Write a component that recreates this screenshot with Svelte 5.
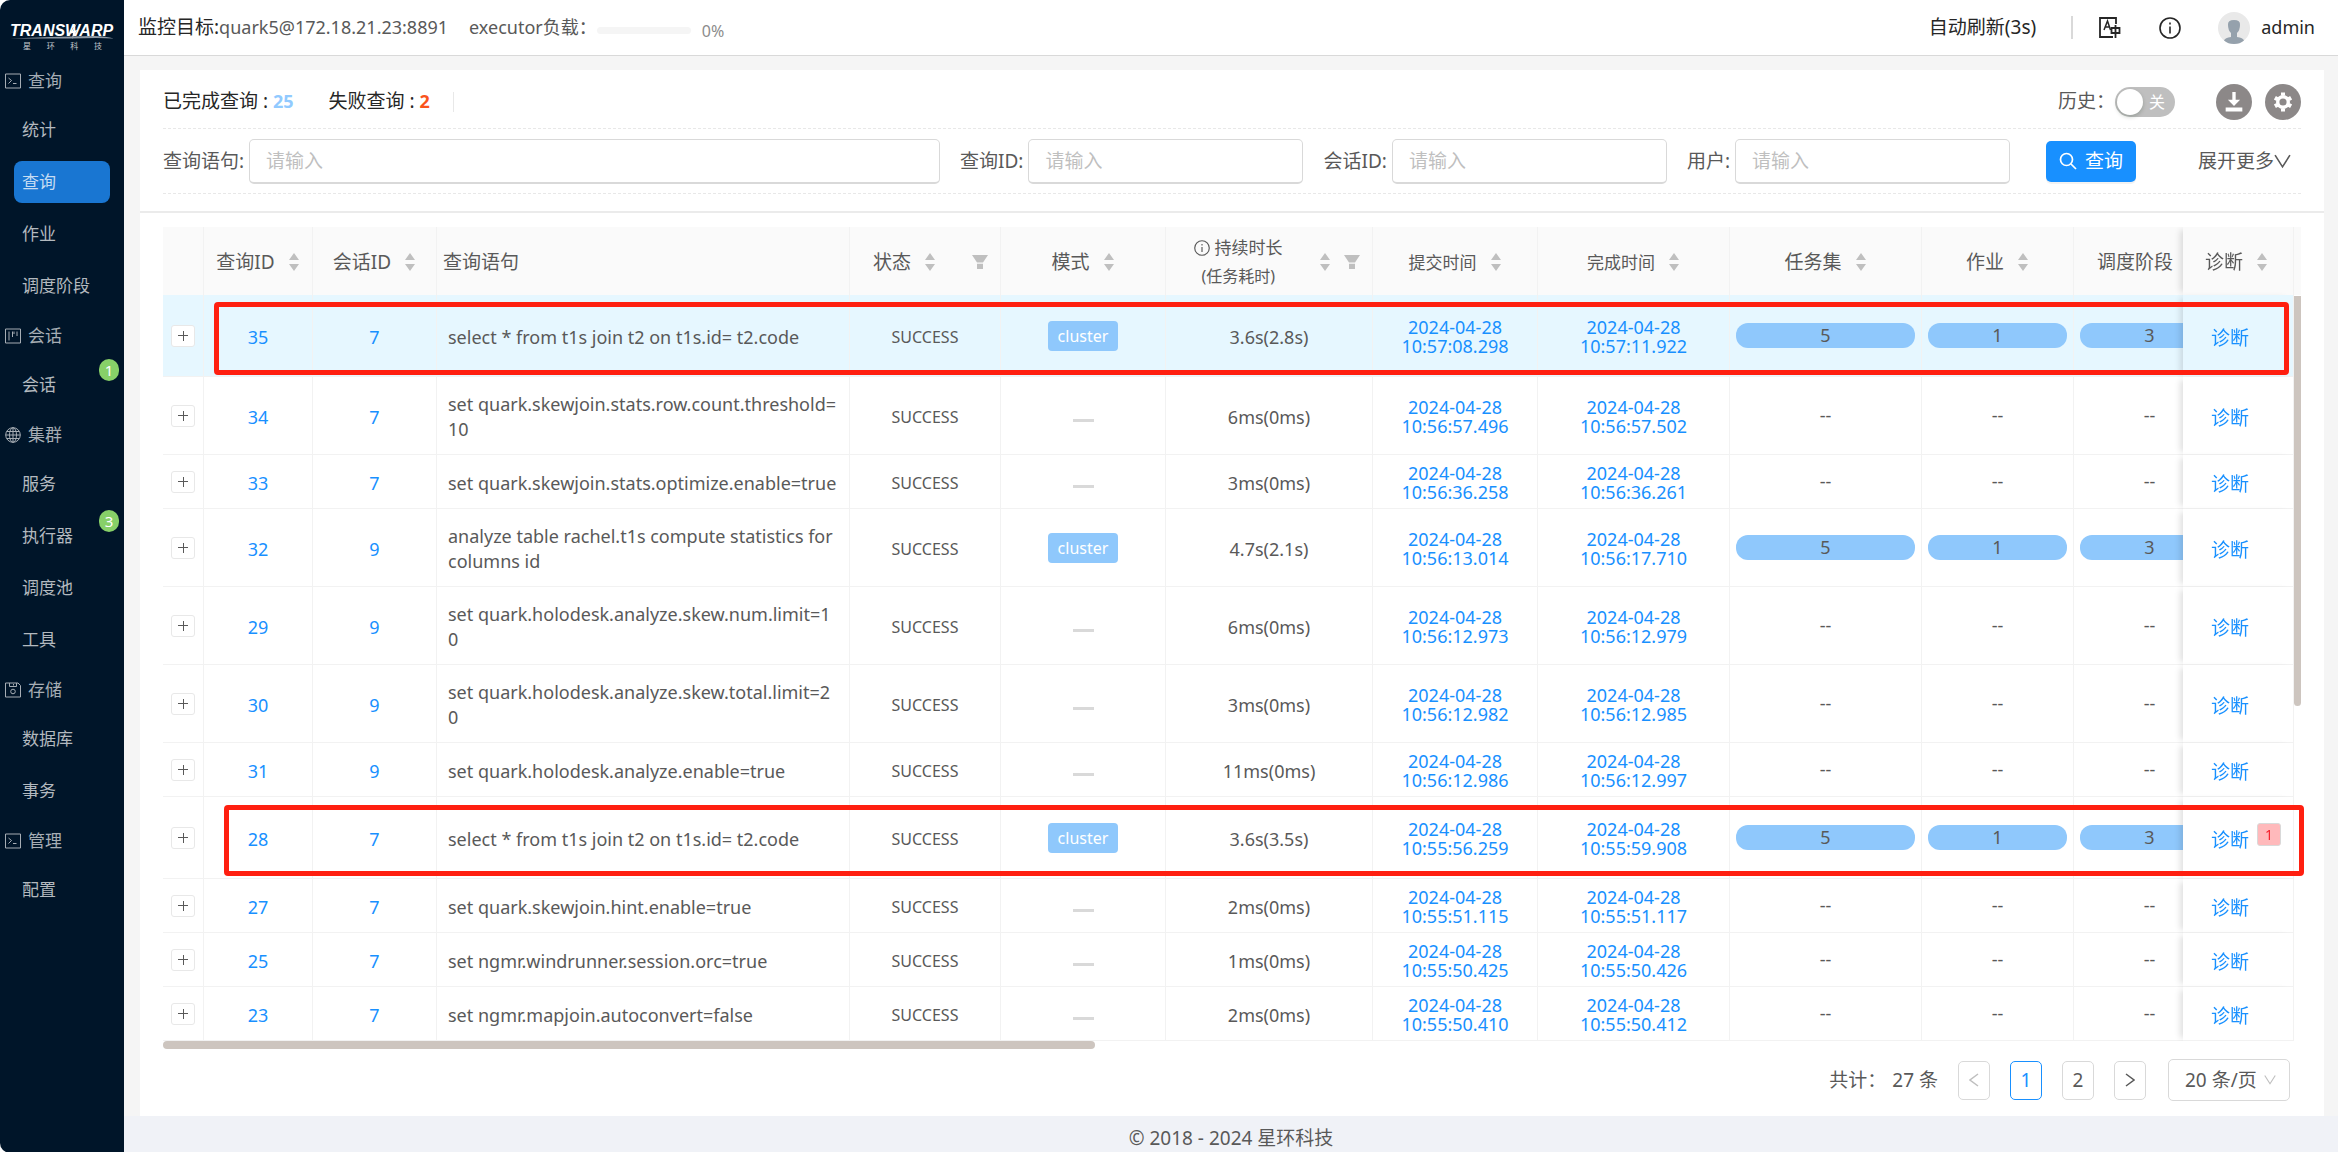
<script>

let active = '查询'
let history = false
let page = 1
let pageSize = '20'
let sql = ''
let queryId = ''
let sessionId = ''
let user = ''

const menu = [
	{ icon: 'terminal', name: '查询', items: [['统计'], ['查询'], ['作业'], ['调度阶段']] },
	{ icon: 'board', name: '会话', items: [['会话', 1]] },
	{ icon: 'globe', name: '集群', items: [['服务'], ['执行器', 3], ['调度池'], ['工具']] },
	{ icon: 'disk', name: '存储', items: [['数据库'], ['事务']] },
	{ icon: 'terminal', name: '管理', items: [['配置']] },
]

// id, session, sql, duration, submitted, finished, [stage sets, jobs, stages], warnings
const rows = [
	[35, 7, 'select * from t1s join t2 on t1s.id= t2.code', '3.6s(2.8s)', '10:57:08.298', '10:57:11.922', [5, 1, 3]],
	[34, 7, 'set quark.skewjoin.stats.row.count.threshold=\n10', '6ms(0ms)', '10:56:57.496', '10:56:57.502'],
	[33, 7, 'set quark.skewjoin.stats.optimize.enable=true', '3ms(0ms)', '10:56:36.258', '10:56:36.261'],
	[32, 9, 'analyze table rachel.t1s compute statistics for\ncolumns id', '4.7s(2.1s)', '10:56:13.014', '10:56:17.710', [5, 1, 3]],
	[29, 9, 'set quark.holodesk.analyze.skew.num.limit=1\n0', '6ms(0ms)', '10:56:12.973', '10:56:12.979'],
	[30, 9, 'set quark.holodesk.analyze.skew.total.limit=2\n0', '3ms(0ms)', '10:56:12.982', '10:56:12.985'],
	[31, 9, 'set quark.holodesk.analyze.enable=true', '11ms(0ms)', '10:56:12.986', '10:56:12.997'],
	[28, 7, 'select * from t1s join t2 on t1s.id= t2.code', '3.6s(3.5s)', '10:55:56.259', '10:55:59.908', [5, 1, 3], 1],
	[27, 7, 'set quark.skewjoin.hint.enable=true', '2ms(0ms)', '10:55:51.115', '10:55:51.117'],
	[25, 7, 'set ngmr.windrunner.session.orc=true', '1ms(0ms)', '10:55:50.425', '10:55:50.426'],
	[23, 7, 'set ngmr.mapjoin.autoconvert=false', '2ms(0ms)', '10:55:50.410', '10:55:50.412'],
].map(([id, session, text, cost, from, to, counts, warn]) => ({
	id, session, text, cost, from, to, counts, warn,
	tall: counts && !text.includes('\n'),
}))

</script>

{#snippet sorter()}
	<svg class="sorter" viewBox="0 0 12 18" width="12" height="18">
		<path d="M6 0l5 7H1zM6 18l5-7H1z" fill="#bfbfbf" />
	</svg>
{/snippet}

{#snippet filter()}
	<svg class="filter" viewBox="0 0 16 14" width="16" height="14">
		<path d="M0 0h16l-5 7.500H5zM5 8.700h6V14H5z" fill="#bfbfbf" />
	</svg>
{/snippet}

{#snippet info(size)}
	<svg viewBox="0 0 22 22" width={size} height={size} fill="none" stroke="currentColor" stroke-width="1.600">
		<circle cx="11" cy="11" r="10" />
		<path d="M11 9.500v7M11 5.500v2" />
	</svg>
{/snippet}

{#snippet chevron(w)}
	<svg viewBox="0 0 16 14" width={w} height={w} fill="none" stroke="currentColor" stroke-width="1.500">
		<path d="M1 1l7 11 7-11" />
	</svg>
{/snippet}

<div class="app">
	<aside>
		<div class="logo">
			<b>TRANSWARP</b>
			<svg viewBox="0 0 104 18" width="104" height="18">
				<path d="M67 0l-4 8 4-1-5 9 1-6-4 1z" fill="#fff" />
				<path d="M0 15.500Q60 13 84 13q12 0 20 2.500-14-1-44 0z" fill="#8d98a3" />
			</svg>
			<div class="sub"><span>星</span><span>环</span><span>科</span><span>技</span></div>
		</div>
		<nav>
			{#each menu as group}
				<div class="group">
					<svg viewBox="0 0 16 16" width="16" height="16" fill="none" stroke="currentColor">
						{#if group.icon == 'terminal'}
							<path d="M.5 1h15v14H.5zM3.500 5l3 2.500-3 3M8 10.500h3.500" />
						{:else if group.icon == 'board'}
							<path d="M.5 1h15v14H.5zM4 3.500v9M7.500 3.500V9M9 3.500V6M12 3.500V8" />
						{:else if group.icon == 'globe'}
							<circle cx="8" cy="8" r="7.300" />
							<ellipse cx="8" cy="8" rx="3.500" ry="7.300" />
							<path d="M8 .7v14.600M.7 8h14.600M2 4.500h12M2 11.500h12" />
						{:else}
							<path d="M.5 1h12.500l2.500 2.500V15H.5zM4.500 1v3.500h7V1M8.500 2v1.500" />
							<circle cx="8" cy="9.500" r="2.300" />
						{/if}
					</svg>
					{group.name}
				</div>
				{#each group.items as [name, badge]}
					<a href="#{name}" class:active={group != menu[1] && name == active} on:click|preventDefault={() => active = name}>
						{name}
						{#if badge}<em>{badge}</em>{/if}
					</a>
				{/each}
			{/each}
		</nav>
	</aside>

	<div class="main">
		<header>
			<span class="target"><b>监控目标:</b>quark5@172.18.21.23:8891</span>
			<span class="load">executor负载：</span>
			<div class="progress"></div>
			<small>0%</small>
			<span class="refresh">自动刷新(3s)</span>
			<i class="split"></i>
			<button class="plain lang" aria-label="language">
				<svg viewBox="0 0 22 22" width="22" height="22" fill="none" stroke="currentColor" stroke-width="1.800">
					<path d="M17 7V1H1v19h13" />
					<path d="M5 13l3.500-9 3 9M6 10h5" stroke-width="1.500" />
					<path d="M12.500 11h8v5h-8zM16.500 8v13" stroke-width="1.800" />
				</svg>
			</button>
			<button class="plain about" aria-label="about">{@render info(22)}</button>
			<svg class="avatar" viewBox="0 0 32 32" width="32" height="32">
				<circle cx="16" cy="16" r="16" fill="#e9e9e9" />
				<path d="M10 13q-.500-5 6-5t6 5q0 5-3 8v4q6 .500 7 3.500Q22 32 16 32T6 28.500q1-3 7-3.500v-4q-3-3-3-8z" fill="#95a1ac" />
			</svg>
			<span class="name">admin</span>
		</header>

		<div class="content">
			<section class="top">
				<div class="stats">
					<span>已完成查询 : <b class="done">25</b></span>
					<span>失败查询 : <b class="fail">2</b></span>
					<i></i>
					<label class="history">
						历史：
						<input type="checkbox" bind:checked={history} />
						<span class="switch" class:on={history}>{history ? '开' : '关'}</span>
					</label>
					<button class="round" aria-label="download">
						<svg viewBox="0 0 36 36" width="20" height="20">
							<path d="M15 0h6v14h8L18 25 7 14h8zM3 28h30v7H3z" fill="#fff" />
						</svg>
					</button>
					<button class="round" aria-label="settings">
						<svg viewBox="0 0 20 20" width="20" height="20" fill="none" stroke="#fff">
							<circle cx="10" cy="10" r="5.300" stroke-width="3.400" />
							<path d="M8 2h4M8 18h4M2.200 8.200l2-3.500M15.800 15.300l2-3.500M2.200 11.800l2 3.500M15.800 4.700l2 3.500" stroke-width="3" />
						</svg>
					</button>
				</div>
				<form on:submit|preventDefault>
					<label class="wide">查询语句: <input bind:value={sql} placeholder="请输入" /></label>
					<label>查询ID: <input bind:value={queryId} placeholder="请输入" /></label>
					<label>会话ID: <input bind:value={sessionId} placeholder="请输入" /></label>
					<label>用户: <input bind:value={user} placeholder="请输入" /></label>
					<button class="search">
						<svg viewBox="0 0 18 18" width="18" height="18" fill="none" stroke="#fff" stroke-width="1.700">
							<circle cx="7.500" cy="7.500" r="6" />
							<path d="M12 12l5 5" />
						</svg>
						查询
					</button>
					<a class="more" href="#more">展开更多{@render chevron(17)}</a>
				</form>
			</section>

			<section class="list">
				<div class="box">
					<div class="scroll">
						<table>
							<colgroup>
								<col class="c-plus" /><col class="c-id" /><col class="c-session" /><col class="c-sql" />
								<col class="c-status" /><col class="c-time" /><col class="c-cost" /><col class="c-time" />
								<col class="c-set" /><col class="c-set" /><col class="c-jobs" /><col class="c-jobs" /><col class="c-diag" />
							</colgroup>
							<thead>
								<tr>
									<th></th>
									<th><div>查询ID{@render sorter()}</div></th>
									<th><div>会话ID{@render sorter()}</div></th>
									<th><div class="left">查询语句</div></th>
									<th><div class="status">状态{@render sorter()}{@render filter()}</div></th>
									<th><div>模式{@render sorter()}</div></th>
									<th>
										<div class="cost">
											<span>{@render info(16)} 持续时长<small>(任务耗时)</small></span>
											{@render sorter()}{@render filter()}
										</div>
									</th>
									<th><div class="small">提交时间{@render sorter()}</div></th>
									<th><div class="small">完成时间{@render sorter()}</div></th>
									<th><div>任务集{@render sorter()}</div></th>
									<th><div>作业{@render sorter()}</div></th>
									<th><div class="stage">调度阶段{@render sorter()}</div></th>
									<th class="fixed"><div>诊断{@render sorter()}</div></th>
								</tr>
							</thead>
							<tbody>
								{#each rows as row, i}
									<tr class:hover={i == 0} class:tall={row.tall}>
										<td class="expand"><button class="plus" aria-label="expand"></button></td>
										<td><a href="#q{row.id}">{row.id}</a></td>
										<td><a href="#s{row.session}">{row.session}</a></td>
										<td class="sql">{row.text}</td>
										<td class="state">SUCCESS</td>
										<td class="mode">{#if row.counts}<span class="tag">cluster</span>{:else}<span class="none"></span>{/if}</td>
										<td>{row.cost}</td>
										<td class="date">2024-04-28<br />{row.from}</td>
										<td class="date">2024-04-28<br />{row.to}</td>
										{#each [0, 1, 2] as n}
											<td class="count">{#if row.counts}<span>{row.counts[n]}</span>{:else}--{/if}</td>
										{/each}
										<td class="fixed">
											<a href="#d{row.id}">诊断{#if row.warn}<sup>{row.warn}</sup>{/if}</a>
										</td>
									</tr>
								{/each}
							</tbody>
						</table>
					</div>
					<div class="vbar"><i></i></div>
					<div class="mark first"></div>
					<div class="mark second"></div>
				</div>
				<div class="hbar"></div>
				<div class="pager">
					<span>共计：</span>
					<span class="total">27 条</span>
					<button aria-label="prev" disabled>
						<svg viewBox="0 0 10 14" width="10" height="14" fill="none" stroke="currentColor" stroke-width="1.500"><path d="M9 1L1 7l8 6" /></svg>
					</button>
					{#each [1, 2] as n}
						<button class:current={page == n} on:click={() => page = n}>{n}</button>
					{/each}
					<button aria-label="next">
						<svg viewBox="0 0 10 14" width="10" height="14" fill="none" stroke="currentColor" stroke-width="1.500"><path d="M1 1l8 6-8 6" /></svg>
					</button>
					<label class="size">
						<select bind:value={pageSize} aria-label="page size">
							<option value="20">20 条/页</option>
							<option value="50">50 条/页</option>
						</select>
						{@render chevron(12)}
					</label>
				</div>
			</section>
		</div>

		<footer>© 2018 - 2024 星环科技</footer>
	</div>
</div>

<style>
:global(body) {
	margin: 0;
	background: #fff;
}
.app, .app * {
	box-sizing: border-box;
}
.app {
	display: flex;
	min-height: 100vh;
	font-family: 'Noto Sans', 'Noto Sans CJK SC', sans-serif;
	font-size: 18px;
	line-height: 25px;
	color: #595959;
}
svg {
	flex: none;
}
a {
	color: #1890ff;
	text-decoration: none;
}
button, input, select {
	font: inherit;
	color: inherit;
	margin: 0;
}
button {
	padding: 0;
	cursor: pointer;
}

aside {
	flex: none;
	width: 124px;
	background: #001529;
	color: #a6adb4;
	font-size: 17px;
	border-radius: 10px 0 0 10px;
}
.logo {
	height: 57px;
	padding: 23px 10px 0;
	color: #fff;
	position: relative;
}
.logo b {
	display: block;
	font: italic bold 16px/16px 'Liberation Sans', sans-serif;
}
.logo svg {
	position: absolute;
	left: 10px;
	top: 23px;
}
.sub {
	display: flex;
	justify-content: space-between;
	padding: 3px 12px 0 13px;
	font-size: 8px;
	line-height: 8px;
	color: #c3c9ce;
}
.group {
	display: flex;
	align-items: center;
	gap: 7px;
	height: 47px;
	padding-left: 5px;
}
nav a {
	display: block;
	position: relative;
	height: 42px;
	line-height: 42px;
	margin: 5px 14px;
	padding-left: 8px;
	border-radius: 8px;
	color: #b3b9bf;
}
nav a + a {
	margin-top: 10px;
}
nav a.active {
	background: #1976d2;
	color: #c5dcf3;
}
nav em {
	position: absolute;
	right: -9px;
	top: -5px;
	width: 20px;
	height: 22px;
	line-height: 22px;
	border-radius: 10px;
	background: #87d068;
	color: #fff;
	font-size: 15px;
	font-style: normal;
	text-align: center;
}

.main {
	flex: 1;
	min-width: 0;
	display: flex;
	flex-direction: column;
	background: #f0f2f7;
}
header {
	display: flex;
	align-items: center;
	height: 56px;
	padding: 0 23px 0 14px;
	background: #fff;
	border-bottom: 1px solid #d9d9d9;
}
header b {
	font-weight: normal;
	font-size: 19px;
	color: #262626;
}
.load {
	margin-left: 21px;
}
.progress {
	width: 94px;
	height: 7px;
	margin: 6px 11px 0 0;
	border-radius: 4px;
	background: #f5f5f5;
}
header small {
	margin-top: 8px;
	font-size: 16px;
	color: #8c8c8c;
}
.refresh {
	margin-left: auto;
	font-size: 19px;
	color: #262626;
}
.split {
	width: 2px;
	height: 23px;
	margin: 0 26px 0 35px;
	background: #d9d9d9;
}
.plain {
	display: flex;
	border: 0;
	background: none;
	color: #262626;
}
.about {
	margin: 0 37px 0 38px;
}
.name {
	margin-left: 11px;
	color: #262626;
}

.content {
	padding: 14px 14px 0 16px;
	background: #f5f5f5;
}
section {
	background: #fff;
	padding: 0 23px;
}
.top {
	padding-bottom: 17px;
	border-bottom: 2px solid #ebebeb;
}
.stats {
	display: flex;
	align-items: center;
	height: 59px;
	padding-top: 5px;
	font-size: 19px;
	color: #262626;
	border-bottom: 1px dashed #e8e8e8;
}
.stats > span {
	margin-right: 35px;
	white-space: nowrap;
}
.stats b {
	font-size: 18px;
}
.stats > span:nth-child(2) {
	margin-right: 23px;
}
.done {
	color: #91caff;
}
.fail {
	color: #fa541c;
}
.stats i {
	width: 1px;
	height: 20px;
	background: #e8e8e8;
}
.history {
	display: flex;
	align-items: center;
	margin-left: auto;
	margin-right: 41px;
	color: #595959;
}
.history input {
	position: absolute;
	opacity: 0;
}
.switch {
	position: relative;
	width: 60px;
	height: 30px;
	padding-left: 34px;
	line-height: 30px;
	font-size: 16px;
	border-radius: 15px;
	background: #bfbfbf;
	color: #fff;
}
.switch::after {
	content: '';
	position: absolute;
	left: 2px;
	top: 2px;
	width: 26px;
	height: 26px;
	border-radius: 50%;
	background: #fff;
	box-shadow: 0 2px 4px rgba(0, 35, 11, .2);
}
.switch.on {
	padding-left: 10px;
	background: #1890ff;
}
.switch.on::after {
	left: 32px;
}
.round {
	display: flex;
	align-items: center;
	justify-content: center;
	width: 36px;
	height: 36px;
	border: 0;
	border-radius: 50%;
	background: #8c8888;
}
.round + .round {
	margin-left: 13px;
}
form {
	display: flex;
	align-items: center;
	height: 65px;
	font-size: 19px;
	border-bottom: 1px dashed #e8e8e8;
}
form label {
	display: flex;
	align-items: center;
	gap: 5px;
	margin-right: 20px;
	white-space: nowrap;
}
form .wide {
	flex: 1;
}
form input {
	width: 275px;
	height: 45px;
	padding: 0 16px;
	border: 1px solid #d9d9d9;
	border-bottom-width: 2px;
	border-radius: 5px;
	outline: 0;
	background: #fff;
}
form .wide input {
	flex: 1;
	min-width: 0;
}
form input::placeholder {
	color: #bfbfbf;
}
.search {
	display: flex;
	align-items: center;
	gap: 8px;
	height: 41px;
	margin-left: 16px;
	padding: 0 13px;
	border: 0;
	border-radius: 5px;
	background: #1890ff;
	box-shadow: 0 2px 0 rgba(0, 0, 0, .05);
	color: #fff;
	white-space: nowrap;
}
.more {
	display: flex;
	align-items: center;
	margin: 0 10px 0 62px;
	color: #595959;
	white-space: nowrap;
}

.list {
	padding-top: 14px;
	padding-bottom: 15px;
}
.box {
	display: flex;
	position: relative;
}
.scroll {
	flex: 1;
	min-width: 0;
	overflow: hidden;
}
table {
	table-layout: fixed;
	width: 2174px;
	min-width: 100%;
	border-collapse: separate;
	border-spacing: 0;
}
.c-plus { width: 41px; }
.c-id { width: 109px; }
.c-session { width: 124px; }
.c-sql { width: 413px; }
.c-status { width: 151px; }
.c-time { width: 165px; }
.c-cost { width: 207px; }
.c-set { width: 192px; }
.c-jobs { width: 152px; }
.c-diag { width: 111px; }
th {
	height: 68px;
	padding: 2px 0 0;
	background: #fafafa;
	border-right: 1px solid #f2f2f2;
	font-weight: normal;
	font-size: 19px;
	white-space: nowrap;
}
th div {
	display: flex;
	align-items: center;
	justify-content: center;
	gap: 13px;
}
th .left {
	justify-content: start;
	padding-left: 6px;
}
th .small {
	font-size: 17px;
}
th .stage {
	justify-content: start;
	padding-left: 23px;
}
th .status, th .cost {
	justify-content: start;
	padding: 0 12px 0 23px;
}
th .status .filter, th .cost .sorter {
	margin-left: auto;
}
th .cost {
	padding-left: 28px;
	font-size: 17px;
}
th .cost span {
	line-height: 29px;
}
th .cost span svg {
	vertical-align: -2px;
}
th small {
	display: block;
	font-size: 16px;
}
th.fixed div {
	justify-content: start;
	padding-left: 22px;
}
td {
	height: 54px;
	padding: 3px 6px 0;
	border-right: 1px solid #f2f2f2;
	border-bottom: 1px solid #f2f2f2;
	text-align: center;
}
td.expand, td.mode, td.count {
	padding-top: 0;
}
.tall td {
	height: 82px;
}
.hover td {
	background: #e6f7ff;
}
td.sql {
	padding: 15px 11px 12px;
	text-align: left;
	white-space: pre;
}
.state {
	font-size: 16px;
}
td.date {
	line-height: 19px;
	color: #1890ff;
}
.tag {
	display: inline-block;
	height: 30px;
	line-height: 30px;
	padding: 0 10px;
	border-radius: 4px;
	background: #8fc8fc;
	color: #fff;
	font-size: 16px;
}
.none {
	display: inline-block;
	width: 21px;
	height: 3px;
	background: #d9d9d9;
}
.count span {
	display: block;
	height: 25px;
	border-radius: 12px;
	background: #8fc8fc;
}
.plus {
	display: block;
	width: 24px;
	height: 22px;
	margin: 0 auto;
	border: 1px solid #e8e8e8;
	border-radius: 3px;
	background:
		linear-gradient(#595959, #595959) center / 10px 1px no-repeat,
		linear-gradient(#595959, #595959) center / 1px 10px no-repeat,
		#fff;
}
.fixed {
	position: sticky;
	right: 0;
	background: #fff;
	box-shadow: -6px 0 6px -3px rgba(0, 0, 0, .12);
}
th.fixed {
	background: #fafafa;
}
td.fixed {
	padding: 5px 0 0 28px;
	text-align: left;
	font-size: 19px;
}
.fixed a {
	position: relative;
}
sup {
	position: absolute;
	left: 46px;
	top: -4px;
	width: 24px;
	height: 23px;
	line-height: 21px;
	border: 1px solid #d9d9d9;
	border-radius: 3px;
	background: #ffb9bb;
	color: #f5222d;
	font-size: 14px;
	text-align: center;
}
.vbar {
	width: 7px;
	padding-top: 69px;
	background: linear-gradient(#fafafa 68px, #fff 68px);
}
.vbar i {
	display: block;
	height: 55%;
	border-radius: 0 0 4px 4px;
	background: #cdc5bf;
}
/* red frames round the two compared queries */
.mark {
	position: absolute;
	border: 5px solid #ff1f10;
	border-radius: 4px;
	pointer-events: none;
}
.first {
	left: 51px;
	right: 12px;
	top: 75px;
	height: 73px;
}
.second {
	left: 61px;
	right: -3px;
	top: 578px;
	height: 71px;
}
.hbar {
	width: 932px;
	height: 8px;
	border-radius: 4px;
	background: #cdc5bf;
}
.pager {
	display: flex;
	align-items: center;
	justify-content: flex-end;
	margin-top: 10px;
	padding-right: 11px;
	font-size: 19px;
}
.total {
	margin: 0 20px 0 6px;
}
.pager button {
	display: flex;
	align-items: center;
	justify-content: center;
	width: 32px;
	height: 39px;
	margin-right: 20px;
	border: 1px solid #d9d9d9;
	border-radius: 5px;
	background: #fff;
}
.pager button:disabled {
	color: #bfbfbf;
}
.pager .current {
	border-color: #1890ff;
	color: #1890ff;
}
.size {
	display: flex;
	align-items: center;
	width: 122px;
	height: 42px;
	margin-left: 2px;
	padding: 0 13px 0 16px;
	border: 1px solid #d9d9d9;
	border-radius: 5px;
	color: #bfbfbf;
}
select {
	flex: 1;
	min-width: 0;
	padding: 0;
	border: 0;
	outline: 0;
	appearance: none;
	background: none;
	color: #595959;
}
footer {
	flex: 1;
	padding: 10px 0 2px;
	font-size: 19px;
	text-align: center;
}
</style>
